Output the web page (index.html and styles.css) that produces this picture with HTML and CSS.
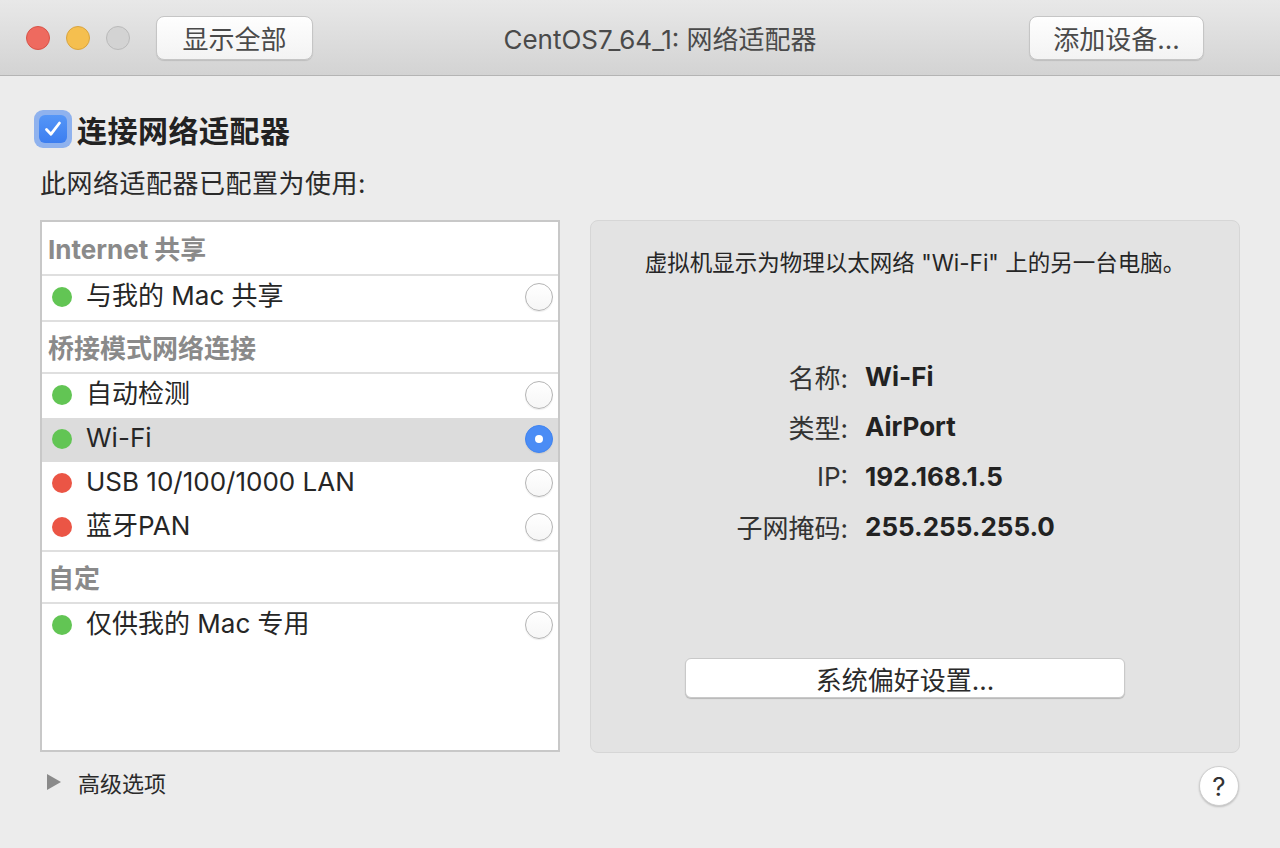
FILE: index.html
```html
<!DOCTYPE html>
<html lang="zh-CN">
<head>
  <meta charset="UTF-8">
  <meta name="viewport" content="width=device-width, initial-scale=1.0">
  <title>CentOS7_64_1: 网络适配器</title>
  <link rel="stylesheet" href="styles.css">
</head>
<body>
  <div class="window">
    <div class="titlebar">
      <div class="lights">
        <span class="light red"></span>
        <span class="light yellow"></span>
        <span class="light gray"></span>
      </div>
      <button class="btn btn-show">显示全部</button>
      <div class="title">CentOS7_64_1: 网络适配器</div>
      <button class="btn btn-add">添加设备...</button>
    </div>

    <div class="content">
      <div class="connect">
        <span class="checkbox">
          <span class="checkbox-box">
            <svg width="24" height="24" viewBox="0 0 24 24"><path d="M5.5 12.5 L10 17.2 L18.5 6" fill="none" stroke="#fff" stroke-width="2.8" stroke-linecap="round" stroke-linejoin="round"/></svg>
          </span>
        </span>
        <span class="connect-label">连接网络适配器</span>
      </div>
      <div class="subtitle">此网络适配器已配置为使用:</div>

      <div class="main">
        <div class="list">
          <div class="list-header first">Internet 共享</div>
          <div class="list-item">
            <span class="dot green"></span><span class="item-label">与我的 Mac 共享</span><span class="radio"></span>
          </div>
          <div class="list-header">桥接模式网络连接</div>
          <div class="list-item">
            <span class="dot green"></span><span class="item-label">自动检测</span><span class="radio"></span>
          </div>
          <div class="list-item selected">
            <span class="dot green"></span><span class="item-label">Wi-Fi</span><span class="radio checked"></span>
          </div>
          <div class="list-item">
            <span class="dot red"></span><span class="item-label">USB 10/100/1000 LAN</span><span class="radio"></span>
          </div>
          <div class="list-item">
            <span class="dot red"></span><span class="item-label">蓝牙PAN</span><span class="radio"></span>
          </div>
          <div class="list-header">自定</div>
          <div class="list-item">
            <span class="dot green"></span><span class="item-label">仅供我的 Mac 专用</span><span class="radio"></span>
          </div>
        </div>

        <div class="panel">
          <p class="desc">虚拟机显示为物理以太网络 "Wi-Fi" 上的另一台电脑。</p>
          <div class="info">
            <span class="info-key">名称:</span><span class="info-val">Wi-Fi</span>
            <span class="info-key">类型:</span><span class="info-val">AirPort</span>
            <span class="info-key">IP:</span><span class="info-val">192.168.1.5</span>
            <span class="info-key">子网掩码:</span><span class="info-val">255.255.255.0</span>
          </div>
          <button class="btn btn-prefs">系统偏好设置...</button>
        </div>
      </div>

      <div class="footer">
        <div class="advanced">
          <span class="triangle"></span>
          <span>高级选项</span>
        </div>
        <button class="help">?</button>
      </div>
    </div>
  </div>
</body>
</html>
```

FILE: styles.css
```css
* {
  box-sizing: border-box;
}
html, body {
  margin: 0;
  padding: 0;
}
body {
  font-family: "Inter", "Noto Sans CJK SC", sans-serif;
  color: #262626;
  background: #ececec;
}
.window {
  width: 1280px;
  height: 848px;
  background: #ececec;
  overflow: hidden;
}

/* 标题栏 */
.titlebar {
  display: flex;
  align-items: center;
  height: 76px;
  padding: 0 76px 0 26px;
  background: linear-gradient(#e8e8e8, #d3d3d3);
  border-bottom: 1px solid #b4b4b4;
}
.lights {
  display: flex;
  gap: 16px;
}
.light {
  width: 24px;
  height: 24px;
  border-radius: 50%;
}
.light.red {
  background: #ee6a5f;
  border: 1px solid #d85348;
}
.light.yellow {
  background: #f5bf4f;
  border: 1px solid #d9a43f;
}
.light.gray {
  background: #d3d3d3;
  border: 1px solid #bababa;
}
.btn {
  font-family: inherit;
  font-size: 26px;
  color: #4a4a4a;
  background: linear-gradient(#fefefe, #f3f3f3);
  border: 1px solid #c5c5c5;
  border-radius: 8px;
  box-shadow: 0 1px 1px rgba(0, 0, 0, 0.12);
  padding: 0;
  height: 44px;
}
.btn-show {
  width: 157px;
  margin-left: 26px;
}
.title {
  flex: 1;
  text-align: center;
  padding-right: 22px;
  font-size: 26px;
  color: #4a4a4a;
}
.btn-add {
  width: 175px;
}

.content {
  padding: 34px 40px 0 40px;
}

/* 勾选 */
.connect {
  display: flex;
  align-items: center;
  margin-left: -6px;
  height: 38px;
}
.checkbox {
  width: 38px;
  height: 38px;
  border-radius: 9px;
  background: #8fb2ee;
  display: flex;
  align-items: center;
  justify-content: center;
}
.checkbox-box {
  width: 28px;
  height: 28px;
  border-radius: 6px;
  background: linear-gradient(#5596f7, #3c7ef0);
  display: flex;
  align-items: center;
  justify-content: center;
}
.connect-label {
  margin-left: 5px;
  font-size: 30px;
  letter-spacing: 0.5px;
  font-weight: 700;
  color: #222;
}
.subtitle {
  margin-top: 20px;
  font-size: 26px;
  letter-spacing: 0.5px;
  line-height: 32px;
  color: #2a2a2a;
}

.main {
  display: flex;
  gap: 30px;
  margin-top: 20px;
  height: 533px;
}

/* 左侧列表 */
.list {
  width: 520px;
  height: 532px;
  background: #fff;
  border: 2px solid #c8c8c8;
}
.list-header {
  height: 54px;
  padding: 12px 0 0 6px;
  font-size: 26px;
  line-height: 30px;
  font-weight: 700;
  color: #8a8a8a;
  border-top: 2px solid #dfdfdf;
  border-bottom: 2px solid #dfdfdf;
}
.list-header.first {
  border-top: none;
  padding-top: 13px;
}
.list-item {
  display: flex;
  align-items: center;
  height: 44px;
  padding: 0 5px 2px 10px;
}
.list-item.selected {
  background: #dcdcdc;
}
.dot {
  width: 20px;
  height: 20px;
  border-radius: 50%;
}
.dot.green {
  background: #62c554;
}
.dot.red {
  background: #eb5545;
}
.item-label {
  flex: 1;
  margin-left: 14px;
  font-size: 26px;
  line-height: 30px;
  color: #262626;
  position: relative;
  top: -1px;
}
.radio {
  width: 28px;
  height: 28px;
  border-radius: 50%;
  border: 1px solid #b4b4b4;
  background: linear-gradient(#fff, #f6f6f6);
  box-shadow: 0 1px 1px rgba(0, 0, 0, 0.08);
  position: relative;
}
.radio.checked {
  border-color: #3f84f2;
  background: #4a8cf5;
}
.radio.checked::after {
  content: "";
  position: absolute;
  left: 50%;
  top: 50%;
  width: 8px;
  height: 8px;
  margin: -4px 0 0 -4px;
  border-radius: 50%;
  background: #fff;
}

/* 右侧面板 */
.panel {
  width: 650px;
  background: #e3e3e3;
  border: 1px solid #d6d6d6;
  border-radius: 8px;
  padding-top: 27px;
}
.desc {
  margin: 0;
  text-align: center;
  font-size: 22.5px;
  line-height: 30px;
  color: #262626;
}
.info {
  display: grid;
  grid-template-columns: 257px auto;
  column-gap: 17px;
  grid-auto-rows: 50px;
  align-items: center;
  margin-top: 73px;
}
.info-key {
  text-align: right;
  font-size: 26px;
  color: #333;
}
.info-val {
  font-size: 26px;
  font-weight: 700;
  color: #222;
}
.btn-prefs {
  display: block;
  margin: 107px 0 0 94px;
  width: 440px;
  height: 40px;
  background: #fff;
  border: 1px solid #c9c9c9;
  border-radius: 6px;
  color: #2a2a2a;
  box-shadow: 0 1px 1px rgba(0, 0, 0, 0.2);
}

/* 底部 */
.footer {
  display: flex;
  align-items: center;
  justify-content: space-between;
  margin-top: 9px;
  height: 40px;
}
.advanced {
  display: flex;
  align-items: center;
  gap: 17px;
  margin-left: 7px;
  font-size: 22px;
  color: #2a2a2a;
}
.triangle {
  width: 0;
  height: 0;
  border-top: 8px solid transparent;
  border-bottom: 8px solid transparent;
  border-left: 14px solid #8a8a8a;
}
.help {
  width: 40px;
  height: 40px;
  border-radius: 50%;
  border: 1px solid #cfcfcf;
  background: #fff;
  box-shadow: 0 1px 2px rgba(0, 0, 0, 0.2);
  font-family: inherit;
  font-size: 26px;
  color: #333;
  padding: 0;
  margin-right: 1px;
  margin-top: 8px;
}
```
